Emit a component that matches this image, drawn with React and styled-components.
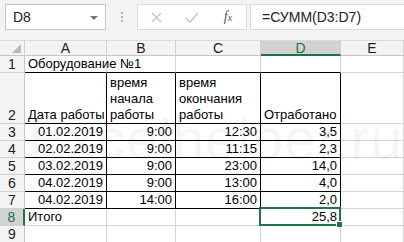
import styled, { createGlobalStyle } from "styled-components";

const GlobalStyle = createGlobalStyle`
  html, body { margin: 0; padding: 0; background: #ffffff; }
  body { font-family: "Liberation Sans", Arial, sans-serif; overflow: hidden; }
`;

const GREEN = "#217346";
const GRID = "#d4d4d4";

const Window = styled.div`
  width: 404px;
  height: 242px;
  position: relative;
  overflow: hidden;
  background: #ffffff;
`;

const Toolbar = styled.div`
  height: 40px;
  box-sizing: border-box;
  padding: 4px 0 10px 5px;
  background: #f3f3f3;
  display: flex;
  align-items: stretch;
`;

const NameBox = styled.div`
  width: 101px;
  box-sizing: border-box;
  background: #fff;
  border: 1px solid #c6c6c6;
  display: flex;
  align-items: center;
  justify-content: space-between;
  padding: 0 7px 0 7px;
  font-size: 14px;
  color: #222;
`;

const Caret = styled.span`
  width: 0;
  height: 0;
  border-left: 4px solid transparent;
  border-right: 4px solid transparent;
  border-top: 4px solid #777;
  margin-top: 1px;
`;

const Dots = styled.div`
  width: 31px;
  display: flex;
  flex-direction: column;
  align-items: center;
  justify-content: center;
  gap: 2px;
  span {
    width: 2px;
    height: 2px;
    background: #b5b5b5;
  }
`;

const Buttons = styled.div`
  width: 110px;
  box-sizing: border-box;
  background: #fff;
  border: 1px solid #dadada;
  display: flex;
  align-items: center;
`;

const ToolButton = styled.div`
  width: ${(p) => p.w}px;
  display: flex;
  align-items: center;
  justify-content: center;
  color: ${(p) => p.color || "#c8c8c8"};
  font-family: "Liberation Serif", serif;
  font-style: italic;
  font-size: 14px;
`;

const Formula = styled.div`
  flex: 1;
  margin-left: 3px;
  background: #fff;
  border: 1px solid #dadada;
  border-right: none;
  display: flex;
  align-items: center;
  padding-left: 11px;
  font-size: 14px;
  color: #222;
`;

const Sheet = styled.div`
  display: grid;
  grid-template-columns: 25px 82px 69px 85px 80px 1fr;
  grid-template-rows: 16px 17px 51px repeat(7, 17px);
  background: #fff;
`;

const ColHead = styled.div`
  box-sizing: border-box;
  background: ${(p) => (p.active ? "#d2d2d2" : "#f3f3f3")};
  border-top: 1px solid #dadada;
  border-right: 1px solid #d0d0d0;
  border-bottom: ${(p) => (p.active ? `2px solid ${GREEN}` : "1px solid #c6c6c6")};
  color: ${(p) => (p.active ? GREEN : "#222")};
  font-size: 14px;
  line-height: 14px;
  display: flex;
  align-items: center;
  justify-content: center;
`;

const Corner = styled.div`
  box-sizing: border-box;
  background: #f3f3f3;
  border-top: 1px solid #dadada;
  border-right: 1px solid #d0d0d0;
  border-bottom: 1px solid #c6c6c6;
  position: relative;
  &::after {
    content: "";
    position: absolute;
    right: 3px;
    bottom: 2px;
    width: 0;
    height: 0;
    border-left: 9px solid transparent;
    border-bottom: 9px solid #b9b9b9;
  }
`;

const RowHead = styled.div`
  box-sizing: border-box;
  background: ${(p) => (p.active ? "#d2d2d2" : "#f3f3f3")};
  border-bottom: 1px solid #d0d0d0;
  border-right: ${(p) => (p.active ? `2px solid ${GREEN}` : "1px solid #c6c6c6")};
  color: ${(p) => (p.active ? GREEN : "#222")};
  font-size: 14px;
  display: flex;
  align-items: flex-end;
  justify-content: center;
  line-height: 16px;
`;

const Cell = styled.div`
  box-sizing: border-box;
  border-right: 1px solid ${(p) => (p.br ? "#000" : GRID)};
  border-bottom: 1px solid ${(p) => (p.bb ? "#000" : GRID)};
  padding: 0 3px 0 3px;
  font-size: 13px;
  line-height: 16px;
  color: #000;
  white-space: ${(p) => (p.wrap ? "normal" : "nowrap")};
  overflow: ${(p) => (p.spill ? "visible" : "hidden")};
  display: flex;
  flex-direction: column;
  justify-content: flex-end;
  text-align: ${(p) => (p.num ? "right" : "left")};
  position: relative;
  z-index: ${(p) => (p.spill ? 2 : 1)};
`;

const Selection = styled.div`
  position: absolute;
  left: -2px;
  top: -2px;
  right: -1px;
  bottom: -1px;
  border: 2px solid ${GREEN};
  &::after {
    content: "";
    position: absolute;
    right: -4px;
    bottom: -4px;
    width: 5px;
    height: 5px;
    background: ${GREEN};
    border: 1px solid #fff;
  }
`;

const Watermark = styled.div`
  position: absolute;
  left: 28px;
  top: 106px;
  font-size: 57px;
  font-family: "Liberation Sans", Arial, sans-serif;
  color: rgba(0, 0, 0, 0.04);
  pointer-events: none;
  z-index: 5;
  letter-spacing: 1px;
`;

const cols = ["A", "B", "C", "D", "E"];

const data = [
  ["01.02.2019", "9:00", "12:30", "3,5"],
  ["02.02.2019", "9:00", "11:15", "2,3"],
  ["03.02.2019", "9:00", "23:00", "14,0"],
  ["04.02.2019", "9:00", "13:00", "4,0"],
  ["04.02.2019", "14:00", "16:00", "2,0"],
];

export default function App() {
  return (
    <Window>
      <GlobalStyle />
      <Toolbar>
        <NameBox>
          D8
          <Caret />
        </NameBox>
        <Dots>
          <span />
          <span />
          <span />
        </Dots>
        <Buttons>
          <ToolButton w={36}>
            <svg width="11" height="11" viewBox="0 0 11 11">
              <path d="M1 1 L10 10 M10 1 L1 10" stroke="#c4c4c4" strokeWidth="1.3" fill="none" />
            </svg>
          </ToolButton>
          <ToolButton w={36}>
            <svg width="14" height="11" viewBox="0 0 14 11">
              <path d="M1 6 L5 10 L13 1" stroke="#c4c4c4" strokeWidth="1.5" fill="none" />
            </svg>
          </ToolButton>
          <ToolButton w={36} color="#555">
            f<span style={{ fontSize: "10px" }}>x</span>
          </ToolButton>
        </Buttons>
        <Formula>=СУММ(D3:D7)</Formula>
      </Toolbar>
      <Sheet>
        <Corner />
        {cols.map((c) => (
          <ColHead key={c} active={c === "D"}>
            {c}
          </ColHead>
        ))}

        <RowHead>1</RowHead>
        <Cell spill bb>Оборудование №1</Cell>
        <Cell bb />
        <Cell bb />
        <Cell bb />
        <Cell />

        <RowHead>2</RowHead>
        <Cell br bb>Дата работы</Cell>
        <Cell br bb wrap>время начала работы</Cell>
        <Cell br bb wrap>время окончания работы</Cell>
        <Cell br bb>Отработано</Cell>
        <Cell />

        {data.map((row, i) => (
          <>
            <RowHead key={`h${i}`}>{i + 3}</RowHead>
            {row.map((v, j) => (
              <Cell key={`${i}-${j}`} num br bb>
                {v}
              </Cell>
            ))}
            <Cell key={`e${i}`} />
          </>
        ))}

        <RowHead active>8</RowHead>
        <Cell spill>Итого</Cell>
        <Cell />
        <Cell />
        <Cell num spill>
          25,8
          <Selection />
        </Cell>
        <Cell />

        <RowHead>9</RowHead>
        <Cell />
        <Cell />
        <Cell />
        <Cell />
        <Cell />
      </Sheet>
      <Watermark>Excelhelper.ru</Watermark>
    </Window>
  );
}
